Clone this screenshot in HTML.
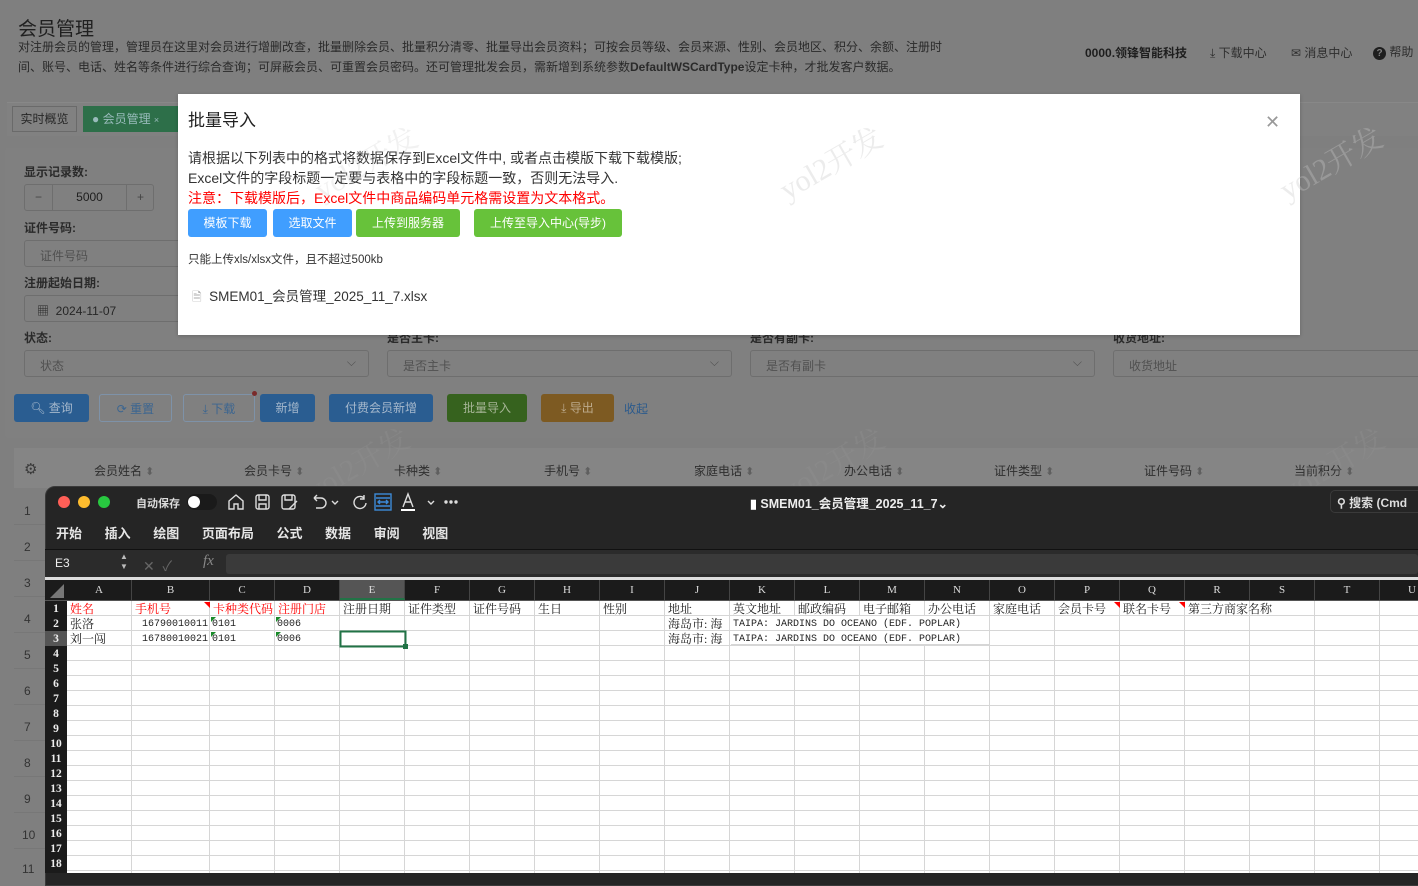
<!DOCTYPE html>
<html><head><meta charset="utf-8">
<style>
*{box-sizing:border-box;margin:0;padding:0}
body{width:1418px;height:873px;overflow:hidden;position:relative;background:#7f7f7f;font-family:"Liberation Sans","Noto Sans CJK SC",sans-serif;color:#1e1e1e}
.a{position:absolute;white-space:nowrap}
.lbl{font-size:12px;font-weight:bold;color:#2a2a2a}
.inp{position:absolute;height:27px;border:1px solid #6e6e6e;border-radius:3px;background:#808080;font-size:12px;color:#505050;padding:6px 15px}
.btn{position:absolute;height:28px;border-radius:3px;font-size:12px;color:#9aa7b5;text-align:center;line-height:28px}
.th{position:absolute;top:462px;font-size:12px;color:#2e2e2e}
.th:after{content:" ⬍";color:#5f5f5f;font-size:11px}
.mb{position:absolute;top:115px;height:28px;border-radius:3px;color:#fff;font-size:12px;line-height:28px;text-align:center}
.wm{position:absolute;font-size:30px;color:rgba(150,150,150,0.25);transform:rotate(-30deg);font-family:"Liberation Serif","Noto Serif CJK SC",serif}
.ss{font-family:"Liberation Serif","Noto Serif CJK SC",serif;font-size:11.5px}
.ch{position:absolute;top:580px;height:20px;line-height:20px;text-align:center;color:#ddd;border-right:1px solid #444;font-size:11px}
.rn{position:absolute;left:45px;width:22px;height:15px;line-height:16px;text-align:center;color:#eee;font-weight:bold;font-size:11.5px}
.cell{position:absolute;height:15px;line-height:17px;font-size:12px;color:#222;overflow:hidden}
.m{font-family:"Liberation Mono",monospace;font-size:10px}
.red{color:#f00}
</style></head><body>
<!-- background page -->
<div class="a" style="left:18px;top:14px;font-size:19px;color:#202020">会员管理</div>
<div class="a" style="left:18px;top:37px;font-size:12px;color:#2a2a2a;line-height:20px">对注册会员的管理，管理员在这里对会员进行增删改查，批量删除会员、批量积分清零、批量导出会员资料；可按会员等级、会员来源、性别、会员地区、积分、余额、注册时<br>间、账号、电话、姓名等条件进行综合查询；可屏蔽会员、可重置会员密码。还可管理批发会员，需新增到系统参数<b>DefaultWSCardType</b>设定卡种，才批发客户数据。</div>
<div class="a" style="left:1085px;top:44px;font-size:12px;font-weight:bold;color:#1e1e1e">0000.领锋智能科技</div>
<div class="a" style="left:1210px;top:44px;font-size:12px;color:#2e2e2e">⤓ 下载中心</div>
<div class="a" style="left:1291px;top:44px;font-size:12px;color:#2e2e2e">✉ 消息中心</div>
<div class="a" style="left:1373px;top:43px;font-size:12px;color:#2e2e2e"><span style="display:inline-block;width:13px;height:13px;border-radius:50%;background:#1e1e1e;color:#7f7f7f;text-align:center;font-size:10px;line-height:13px;font-weight:bold">?</span> 帮助</div>
<div class="a" style="left:7px;top:102px;width:1411px;height:34px;background:#818181;border-top:1px solid #888"></div>
<div class="a" style="left:12px;top:106px;width:65px;height:26px;border:1px solid #6a6a6a;font-size:12px;line-height:24px;text-align:center;color:#262626">实时概览</div>
<div class="a" style="left:83px;top:106px;width:100px;height:26px;background:#2d6f49;font-size:12px;line-height:26px;color:#9bb;padding-left:9px">● 会员管理 <span style="font-size:9px">×</span></div>
<div class="a" style="left:5px;top:148px;width:1413px;height:290px;background:#808080;border-radius:3px"></div>
<div class="a lbl" style="left:24px;top:163px">显示记录数:</div>
<div class="a" style="left:24px;top:184px;width:130px;height:27px;border:1px solid #6e6e6e;border-radius:3px;font-size:12px;line-height:25px">
 <span class="a" style="left:0;width:28px;text-align:center;color:#444;border-right:1px solid #6e6e6e;height:25px">−</span>
 <span class="a" style="left:28px;width:73px;text-align:center">5000</span>
 <span class="a" style="left:101px;width:28px;text-align:center;color:#444;border-left:1px solid #6e6e6e;height:25px">+</span></div>
<div class="a lbl" style="left:24px;top:219px">证件号码:</div>
<div class="inp" style="left:24px;top:240px;width:160px">证件号码</div>
<div class="a lbl" style="left:24px;top:274px">注册起始日期:</div>
<div class="inp" style="left:24px;top:295px;width:160px;color:#262626;padding-left:12px">▦&nbsp; 2024-11-07</div>
<div class="a lbl" style="left:24px;top:329px">状态:</div>
<div class="inp" style="left:24px;top:350px;width:345px">状态<span class="a" style="right:12px;top:4px">⌵</span></div>
<div class="a lbl" style="left:387px;top:329px">是否主卡:</div>
<div class="inp" style="left:387px;top:350px;width:345px">是否主卡<span class="a" style="right:12px;top:4px">⌵</span></div>
<div class="a lbl" style="left:750px;top:329px">是否有副卡:</div>
<div class="inp" style="left:750px;top:350px;width:345px">是否有副卡<span class="a" style="right:12px;top:4px">⌵</span></div>
<div class="a lbl" style="left:1113px;top:329px">收货地址:</div>
<div class="inp" style="left:1113px;top:350px;width:320px">收货地址</div>
<div class="btn" style="left:14px;top:394px;width:75px;background:#2a5d91;color:#a5b8cc">🔍︎ 查询</div>
<div class="btn" style="left:99px;top:394px;width:73px;border:1px solid #7e92a8;color:#3b6590">⟳ 重置</div>
<div class="btn" style="left:183px;top:394px;width:72px;border:1px solid #7e92a8;color:#3b6590">⤓ 下载</div>
<div class="a" style="left:252px;top:391px;width:5px;height:5px;border-radius:50%;background:#7a2b2b"></div>
<div class="btn" style="left:260px;top:394px;width:55px;background:#2a5d91;color:#a5b8cc">新增</div>
<div class="btn" style="left:329px;top:394px;width:104px;background:#2a5d91;color:#a5b8cc">付费会员新增</div>
<div class="btn" style="left:447px;top:394px;width:80px;background:#36621e;color:#a6b596">批量导入</div>
<div class="btn" style="left:541px;top:394px;width:73px;background:#7d5a22;color:#bcaa8c">⤓ 导出</div>
<div class="a" style="left:624px;top:400px;font-size:12px;color:#2b5a8c">收起</div>
<div class="a" style="left:14px;top:448px;width:1404px;height:40px;background:#858585"></div>
<div class="a" style="left:24px;top:460px;font-size:15px;color:#3a3a3a">⚙</div>
<div class="th" style="left:94px">会员姓名</div><div class="th" style="left:244px">会员卡号</div><div class="th" style="left:394px">卡种类</div><div class="th" style="left:544px">手机号</div><div class="th" style="left:694px">家庭电话</div><div class="th" style="left:844px">办公电话</div><div class="th" style="left:994px">证件类型</div><div class="th" style="left:1144px">证件号码</div><div class="th" style="left:1294px">当前积分</div>
<div class="a" style="left:24px;top:504px;font-size:12px;color:#333">1</div><div class="a" style="left:24px;top:540px;font-size:12px;color:#333">2</div><div class="a" style="left:24px;top:576px;font-size:12px;color:#333">3</div><div class="a" style="left:24px;top:612px;font-size:12px;color:#333">4</div><div class="a" style="left:24px;top:648px;font-size:12px;color:#333">5</div><div class="a" style="left:24px;top:684px;font-size:12px;color:#333">6</div><div class="a" style="left:24px;top:720px;font-size:12px;color:#333">7</div><div class="a" style="left:24px;top:756px;font-size:12px;color:#333">8</div><div class="a" style="left:24px;top:792px;font-size:12px;color:#333">9</div><div class="a" style="left:22px;top:828px;font-size:12px;color:#333">10</div><div class="a" style="left:22px;top:862px;font-size:12px;color:#333">11</div>
<div class="a" style="left:14px;top:524px;width:31px;height:1px;background:#777;box-shadow:0 36px #777,0 72px #777,0 108px #777,0 144px #777,0 180px #777,0 216px #777,0 252px #777,0 288px #777,0 324px #777"></div>
<div class="wm" style="left:300px;top:440px">yol2开发</div><div class="wm" style="left:775px;top:440px">yol2开发</div><div class="wm" style="left:1275px;top:440px">yol2开发</div>

<!-- modal -->
<div class="a" style="left:178px;top:94px;width:1122px;height:241px;background:#fff;box-shadow:0 1px 4px rgba(0,0,0,.2)">
 <div class="a" style="left:10px;top:12px;font-size:17px;color:#222">批量导入</div>
 <div class="a" style="left:1087px;top:18px;font-size:18px;color:#999">✕</div>
 <div class="a" style="left:10px;top:54px;font-size:14px;color:#333;line-height:20px">请根据以下列表中的格式将数据保存到Excel文件中, 或者点击模版下载下载模版;<br>Excel文件的字段标题一定要与表格中的字段标题一致，否则无法导入.<br><span style="color:#f00">注意：下载模版后，Excel文件中商品编码单元格需设置为文本格式。</span></div>
 <div class="mb" style="left:10px;width:79px;background:#409eff">模板下载</div>
 <div class="mb" style="left:95px;width:79px;background:#409eff">选取文件</div>
 <div class="mb" style="left:178px;width:104px;background:#67c23a">上传到服务器</div>
 <div class="mb" style="left:296px;width:148px;background:#67c23a">上传至导入中心(导步)</div>
 <div class="a" style="left:10px;top:157px;font-size:11.5px;color:#333">只能上传xls/xlsx文件，且不超过500kb</div>
 <div class="a" style="left:14px;top:191px;font-size:13.5px;color:#333"><span style="color:#aaa;font-size:12px">🗎</span>&nbsp; SMEM01_会员管理_2025_11_7.xlsx</div>
 <div class="wm" style="left:595px;top:45px;color:rgba(200,200,200,.35)">yol2开发</div>
 <div class="wm" style="left:1095px;top:45px;color:rgba(200,200,200,.35)">yol2开发</div>
 <div class="wm" style="left:130px;top:45px;color:rgba(210,210,210,.3)">yol2开发</div>
</div>

<!-- excel window -->
<div class="a" style="left:45px;top:486px;width:1380px;height:400px;background:#252525;border-radius:10px 0 0 0;border:1px solid #3a3a3a;overflow:hidden"></div>
<div class="a" style="left:58px;top:496px;width:12px;height:12px;border-radius:50%;background:#ff5f57"></div>
<div class="a" style="left:78px;top:496px;width:12px;height:12px;border-radius:50%;background:#febc2e"></div>
<div class="a" style="left:98px;top:496px;width:12px;height:12px;border-radius:50%;background:#28c840"></div>
<div class="a" style="left:136px;top:495px;font-size:11px;color:#ddd;font-weight:bold">自动保存</div>
<div class="a" style="left:187px;top:494px;width:30px;height:16px;border-radius:8px;background:#1a1a1a"><div class="a" style="left:1px;top:2px;width:12px;height:12px;border-radius:50%;background:#fff"></div></div>
<svg class="a" style="left:226px;top:492px" width="240" height="20" viewBox="0 0 240 20" fill="none" stroke="#ddd" stroke-width="1.4">
 <path d="M3 9 L10 3 L17 9 V17 H12 V12 H8 V17 H3 Z"/>
 <rect x="30" y="3" width="13" height="14" rx="2"/><path d="M33 3 V8 H40 V3 M33 17 V12 H40 V17"/>
 <rect x="56" y="3" width="13" height="14" rx="2"/><path d="M59 3 V8 H66 V3 M63 17 L71 9"/>
 <path d="M88 6 H95 A5 5 0 0 1 95 16 H90 M88 6 L91 3 M88 6 L91 9"/><path d="M106 9 L109 12 L112 9"/>
 <path d="M138 6 A6 6 0 1 0 140 11 M138 3 V7 H134"/>
 <rect x="149" y="2" width="16" height="16" stroke="#3c8ad8"/><path d="M150 6 H164 M150 14 H164 M152 10 H162 M154 8 L152 10 L154 12 M160 8 L162 10 L160 12" stroke="#3c8ad8"/>
 <path d="M177 15 L182 2 L187 15 M179 10 H185"/><rect x="175" y="17" width="14" height="2" fill="#fff" stroke="none"/><path d="M202 9 L205 12 L208 9"/>
 <circle cx="220" cy="10" r="1" fill="#ddd"/><circle cx="225" cy="10" r="1" fill="#ddd"/><circle cx="230" cy="10" r="1" fill="#ddd"/>
</svg>
<div class="a" style="left:750px;top:493px;font-size:12.5px;color:#eee;font-weight:bold"><span style="color:#fff">▮</span> SMEM01_会员管理_2025_11_7⌄</div>
<div class="a" style="left:1330px;top:490px;width:100px;height:23px;border:1px solid #3a3a3a;border-radius:5px;font-size:12px;color:#ddd;font-weight:bold;padding:3px 6px">⚲ 搜索 (Cmd</div>
<div class="a" style="left:56px;top:523px;font-size:13px;font-weight:bold;color:#e6e6e6;word-spacing:19px">开始 插入 绘图 页面布局 公式 数据 审阅 视图</div>
<div class="a" style="left:45px;top:549px;width:1373px;height:1px;background:#111"></div>
<div class="a" style="left:45px;top:550px;width:1373px;height:27px;background:#2b2b2b"></div>
<div class="a" style="left:55px;top:556px;font-size:12px;color:#eee">E3</div>
<div class="a" style="left:120px;top:552px;font-size:8px;color:#bbb;line-height:10px">▲<br>▼</div>
<div class="a" style="left:143px;top:556px;font-size:14px;color:#666">✕ &nbsp;✓</div>
<div class="a" style="left:203px;top:553px;font-size:15px;color:#888;font-style:italic;font-family:'Liberation Serif',serif">fx</div>
<div class="a" style="left:226px;top:554px;width:1192px;height:20px;background:#3a3a3a;border-radius:3px"></div>
<div class="a" style="left:45px;top:577px;width:1373px;height:3px;background:#ddd"></div>
<div class="a" style="left:45px;top:580px;width:1373px;height:21px;background:#1b1b1b;border-bottom:1px solid #555"></div>
<div class="a" style="left:45px;top:601px;width:22px;height:272px;background:#1b1b1b"></div>
<div class="a" style="left:67px;top:601px;width:1351px;height:272px;background-color:#fff;background-image:repeating-linear-gradient(to bottom,transparent 0,transparent 14px,#d6d6d6 14px,#d6d6d6 15px)"></div>
<svg class="a" style="left:47px;top:583px" width="18" height="16"><path d="M17 1 V15 H3 Z" fill="#777"/></svg>
<div class="ss">
<div class="ch" style="left:67px;width:65px">A</div><div class="ch" style="left:132px;width:78px">B</div><div class="ch" style="left:210px;width:65px">C</div><div class="ch" style="left:275px;width:65px">D</div><div class="ch" style="left:340px;width:65px;background:#555;border-bottom:2px solid #217346">E</div><div class="ch" style="left:405px;width:65px">F</div><div class="ch" style="left:470px;width:65px">G</div><div class="ch" style="left:535px;width:65px">H</div><div class="ch" style="left:600px;width:65px">I</div><div class="ch" style="left:665px;width:65px">J</div><div class="ch" style="left:730px;width:65px">K</div><div class="ch" style="left:795px;width:65px">L</div><div class="ch" style="left:860px;width:65px">M</div><div class="ch" style="left:925px;width:65px">N</div><div class="ch" style="left:990px;width:65px">O</div><div class="ch" style="left:1055px;width:65px">P</div><div class="ch" style="left:1120px;width:65px">Q</div><div class="ch" style="left:1185px;width:65px">R</div><div class="ch" style="left:1250px;width:65px">S</div><div class="ch" style="left:1315px;width:65px">T</div><div class="ch" style="left:1380px;width:65px">U</div>
<div class="rn" style="top:601px">1</div><div class="rn" style="top:616px">2</div><div class="rn" style="top:631px;background:#555">3</div><div class="rn" style="top:646px">4</div><div class="rn" style="top:661px">5</div><div class="rn" style="top:676px">6</div><div class="rn" style="top:691px">7</div><div class="rn" style="top:706px">8</div><div class="rn" style="top:721px">9</div><div class="rn" style="top:736px">10</div><div class="rn" style="top:751px">11</div><div class="rn" style="top:766px">12</div><div class="rn" style="top:781px">13</div><div class="rn" style="top:796px">14</div><div class="rn" style="top:811px">15</div><div class="rn" style="top:826px">16</div><div class="rn" style="top:841px">17</div><div class="rn" style="top:856px">18</div>
</div>
<div class="a" style="left:131px;top:601px;width:1px;height:272px;background:#d6d6d6;box-shadow:78px 0 #d6d6d6,143px 0 #d6d6d6,208px 0 #d6d6d6,273px 0 #d6d6d6,338px 0 #d6d6d6,403px 0 #d6d6d6,468px 0 #d6d6d6,533px 0 #d6d6d6,598px 0 #d6d6d6,663px 0 #d6d6d6,728px 0 #d6d6d6,793px 0 #d6d6d6,858px 0 #d6d6d6,923px 0 #d6d6d6,988px 0 #d6d6d6,1053px 0 #d6d6d6,1118px 0 #d6d6d6,1183px 0 #d6d6d6,1248px 0 #d6d6d6"></div>
<div class="a" style="left:731px;top:616px;width:258px;height:29px;background:#fff;border-bottom:1px solid #d6d6d6"></div>
<div class="a" style="left:731px;top:630px;width:258px;height:1px;background:#d6d6d6"></div>
<div class="ss">
<div class="cell red" style="left:70px;top:601px">姓名</div><div class="cell red" style="left:135px;top:601px">手机号</div><div class="cell red" style="left:213px;top:601px">卡种类代码</div><div class="cell red" style="left:278px;top:601px">注册门店</div>
<div class="cell" style="left:343px;top:601px">注册日期</div><div class="cell" style="left:408px;top:601px">证件类型</div><div class="cell" style="left:473px;top:601px">证件号码</div><div class="cell" style="left:538px;top:601px">生日</div><div class="cell" style="left:603px;top:601px">性别</div><div class="cell" style="left:668px;top:601px">地址</div><div class="cell" style="left:733px;top:601px">英文地址</div><div class="cell" style="left:798px;top:601px">邮政编码</div><div class="cell" style="left:863px;top:601px">电子邮箱</div><div class="cell" style="left:928px;top:601px">办公电话</div><div class="cell" style="left:993px;top:601px">家庭电话</div><div class="cell" style="left:1058px;top:601px">会员卡号</div><div class="cell" style="left:1123px;top:601px">联名卡号</div><div class="cell" style="left:1188px;top:601px">第三方商家名称</div>
<div class="cell" style="left:70px;top:616px">张洛</div><div class="cell m" style="left:142px;top:616px">16790010011</div><div class="cell m" style="left:212px;top:616px">0101</div><div class="cell m" style="left:277px;top:616px">0006</div><div class="cell" style="left:668px;top:616px;width:62px">海岛市: 海岛</div><div class="cell m" style="left:733px;top:616px">TAIPA: JARDINS DO OCEANO (EDF. POPLAR)</div>
<div class="cell" style="left:70px;top:631px">刘一闯</div><div class="cell m" style="left:142px;top:631px">16780010021</div><div class="cell m" style="left:212px;top:631px">0101</div><div class="cell m" style="left:277px;top:631px">0006</div><div class="cell" style="left:668px;top:631px;width:62px">海岛市: 海岛</div><div class="cell m" style="left:733px;top:631px">TAIPA: JARDINS DO OCEANO (EDF. POPLAR)</div>
</div>
<svg class="a" style="left:0;top:0" width="1418" height="873">
 <path d="M204 602 h6 v6 Z M1114 602 h6 v6 Z M1179 602 h6 v6 Z" fill="#f00"/>
 <path d="M211 617 h5 l-5 5 Z M276 617 h5 l-5 5 Z M211 632 h5 l-5 5 Z M276 632 h5 l-5 5 Z" fill="#1a8a2a"/>
 <rect x="340.5" y="631.5" width="65" height="15" fill="none" stroke="#217346" stroke-width="2"/>
 <rect x="403" y="644" width="5" height="5" fill="#217346"/>
</svg>
</body></html>
